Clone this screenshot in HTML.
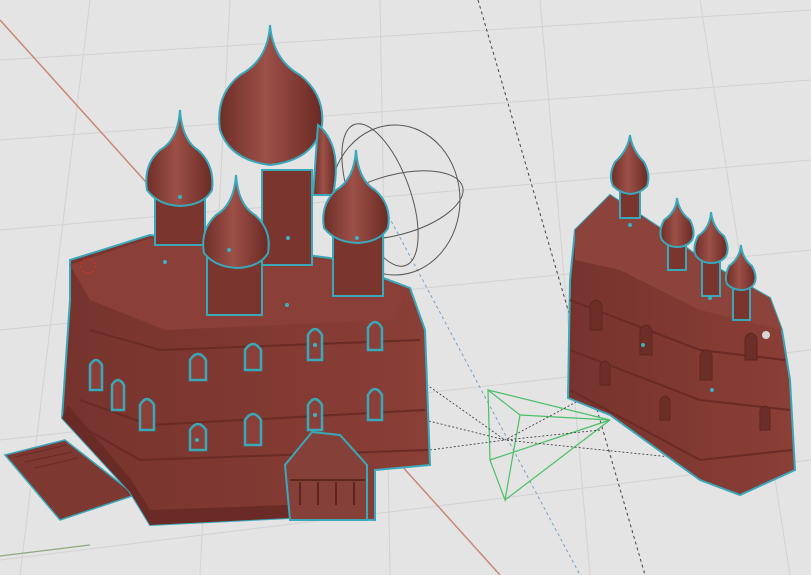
<!DOCTYPE html>
<html><head><meta charset="utf-8"><style>
html,body{margin:0;padding:0;width:811px;height:575px;overflow:hidden;background:#e4e4e4}
</style></head><body>
<svg width="811" height="575" viewBox="0 0 811 575" xmlns="http://www.w3.org/2000/svg">
<defs>
<linearGradient id="dome" x1="0" y1="0" x2="1" y2="0">
<stop offset="0" stop-color="#6e2e28"/><stop offset="0.45" stop-color="#9c5048"/><stop offset="1" stop-color="#6a2a24"/></linearGradient>
<linearGradient id="wall" x1="0" y1="0" x2="1" y2="0">
<stop offset="0" stop-color="#76332d"/><stop offset="1" stop-color="#8a3f37"/></linearGradient>
</defs>
<rect width="811" height="575" fill="#e4e4e4"/>
<g stroke="#d2d2d2" stroke-width="1">
<line x1="0" y1="60" x2="811" y2="10"/><line x1="0" y1="140" x2="811" y2="80"/><line x1="0" y1="230" x2="811" y2="160"/>
<line x1="0" y1="330" x2="811" y2="250"/><line x1="0" y1="440" x2="811" y2="350"/><line x1="0" y1="560" x2="811" y2="460"/>
<line x1="90" y1="0" x2="20" y2="575"/><line x1="230" y1="0" x2="200" y2="575"/><line x1="380" y1="0" x2="390" y2="575"/>
<line x1="540" y1="0" x2="590" y2="575"/><line x1="700" y1="0" x2="790" y2="575"/>
</g>
<line x1="0" y1="20" x2="500" y2="575" stroke="#c88878" stroke-width="1.5"/>
<line x1="0" y1="556" x2="90" y2="545" stroke="#8fa880" stroke-width="1.2"/>
<line x1="478" y1="0" x2="645" y2="575" stroke="#444" stroke-width="1" stroke-dasharray="3,3"/>
<line x1="380" y1="200" x2="580" y2="575" stroke="#7aa0c0" stroke-width="1" stroke-dasharray="3,3"/>
<g fill="none" stroke="#555" stroke-width="1">
<ellipse cx="395" cy="200" rx="65" ry="75"/><ellipse cx="395" cy="205" rx="70" ry="30" transform="rotate(-15 395 205)"/>
<ellipse cx="380" cy="195" rx="30" ry="75" transform="rotate(-20 380 195)"/></g>
<g fill="none" stroke="#4cbf6a" stroke-width="1.2">
<polygon points="488,390 520,415 505,500 490,460"/><line x1="488" y1="390" x2="610" y2="420"/><line x1="520" y1="415" x2="610" y2="420"/>
<line x1="505" y1="500" x2="610" y2="420"/><line x1="490" y1="460" x2="610" y2="420"/></g>
<g stroke="#333" stroke-width="0.8" stroke-dasharray="2,2">
<line x1="420" y1="380" x2="505" y2="440"/><line x1="425" y1="420" x2="505" y2="440"/><line x1="430" y1="450" x2="505" y2="440"/>
<line x1="580" y1="400" x2="505" y2="440"/><line x1="600" y1="430" x2="505" y2="440"/><line x1="700" y1="460" x2="505" y2="440"/>
</g>
<!-- left building -->
<polygon points="5,455 65,440 135,495 60,520" fill="#7c3831" stroke="#3aa8b8" stroke-width="1.5"/>
<g stroke="#6a2a25" stroke-width="1"><line x1="15" y1="457" x2="67" y2="445"/><line x1="25" y1="462" x2="72" y2="452"/><line x1="35" y1="468" x2="78" y2="458"/></g>
<polygon points="70,260 150,235 330,258 410,288 425,330 430,465 375,470 375,520 290,518 150,525 130,492 62,418 70,300" fill="url(#wall)" stroke="#3aa8b8" stroke-width="2"/>
<polygon points="70,265 150,238 330,260 405,290 395,320 165,330 90,300" fill="#8a3f38"/>
<polygon points="62,418 130,492 150,525 290,518 290,505 150,510 130,478 68,405" fill="#6a2a25"/>
<g stroke="#6a2a25" stroke-width="2" fill="none">
<path d="M90 330 L160 350 L420 340"/><path d="M80 400 L150 425 L425 410"/><path d="M70 420 L140 460 L428 450"/>
</g>
<g fill="#8a4038" stroke="#3aa8b8" stroke-width="2.5">
<path d="M190 450 v-20 q8 -12 16 0 v20z"/><path d="M245 445 v-25 q8 -12 16 0 v25z"/><path d="M308 430 v-25 q7 -12 14 0 v25z"/>
<path d="M368 420 v-25 q7 -12 14 0 v25z"/><path d="M190 380 v-20 q8 -12 16 0 v20z"/><path d="M308 360 v-25 q7 -12 14 0 v25z"/>
<path d="M368 350 v-22 q7 -12 14 0 v22z"/><path d="M245 370 v-20 q8 -12 16 0 v20z"/><path d="M140 430 v-25 q7 -12 14 0 v25z"/>
<path d="M90 390 v-25 q6 -10 12 0 v25z"/><path d="M112 410 v-25 q6 -10 12 0 v25z"/>
</g>
<g stroke="#3aa8b8" stroke-width="2">
<rect x="262" y="170" width="50" height="95" fill="#7a352f"/>
<path d="M270 25 Q268 60 240 75 Q215 95 220 130 Q230 160 270 165 Q315 160 322 125 Q325 95 300 75 Q273 60 270 25Z" fill="url(#dome)"/>
<path d="M318 125 q25 20 15 70 l-20 0z" fill="url(#dome)"/>
<rect x="155" y="195" width="50" height="50" fill="#7a352f"/>
<path d="M180 110 Q178 140 160 150 Q143 165 147 190 Q158 205 180 206 Q204 205 212 190 Q215 165 198 150 Q182 140 180 110Z" fill="url(#dome)"/>
<rect x="333" y="232" width="50" height="64" fill="#7a352f"/>
<path d="M356 150 Q354 180 336 190 Q320 205 324 228 Q335 242 357 243 Q380 242 388 228 Q392 205 375 190 Q358 180 356 150Z" fill="url(#dome)"/>
<rect x="207" y="250" width="55" height="65" fill="#7a352f"/>
<path d="M236 175 Q234 205 216 215 Q200 230 204 253 Q215 267 237 268 Q260 267 268 253 Q272 230 255 215 Q238 205 236 175Z" fill="url(#dome)"/>
<polygon points="285,465 312,432 340,435 367,465 367,520 290,520" fill="#86403a"/>
</g>
<g stroke="#5e2520" stroke-width="2"><line x1="290" y1="480" x2="365" y2="480"/><line x1="300" y1="482" x2="300" y2="505"/><line x1="318" y1="482" x2="318" y2="505"/><line x1="336" y1="482" x2="336" y2="505"/><line x1="354" y1="482" x2="354" y2="505"/></g>
<!-- right building -->
<polygon points="570,280 575,230 610,195 660,228 700,258 770,298 782,330 790,380 795,470 740,495 700,480 610,415 568,398" fill="url(#wall)" stroke="#3aa8b8" stroke-width="2"/>
<polygon points="575,230 610,195 660,228 700,258 770,298 782,330 700,310 620,270 575,260" fill="#8c433b"/>
<g stroke="#6a2a25" stroke-width="2" fill="none">
<path d="M570 300 L700 350 L785 360"/><path d="M570 350 L700 400 L790 410"/><path d="M570 390 L700 460 L792 450"/>
</g>
<g fill="#6e2e28" stroke="#5e2520">
<path d="M590 330 v-25 q6 -10 12 0 v25z"/><path d="M640 355 v-25 q6 -10 12 0 v25z"/><path d="M700 380 v-25 q6 -10 12 0 v25z"/><path d="M745 360 v-22 q6 -10 12 0 v22z"/>
<path d="M600 385 v-20 q5 -8 10 0 v20z"/><path d="M660 420 v-20 q5 -8 10 0 v20z"/><path d="M760 430 v-20 q5 -8 10 0 v20z"/>
</g>
<g stroke="#3aa8b8" stroke-width="2">
<rect x="620" y="188" width="20" height="30" fill="#7a352f"/>
<path d="M630 135 Q628 150 615 162 Q608 175 613 186 Q620 193 630 194 Q641 193 647 186 Q651 175 644 162 Q632 150 630 135Z" fill="url(#dome)"/>
<rect x="668" y="240" width="18" height="30" fill="#7a352f"/>
<path d="M677 198 Q676 212 664 220 Q658 232 662 240 Q668 247 677 247 Q687 247 692 240 Q696 232 690 220 Q679 212 677 198Z" fill="url(#dome)"/>
<rect x="702" y="256" width="18" height="40" fill="#7a352f"/>
<path d="M711 212 Q710 228 698 236 Q692 248 696 256 Q702 263 711 263 Q721 263 726 256 Q730 248 724 236 Q713 228 711 212Z" fill="url(#dome)"/>
<rect x="733" y="285" width="17" height="35" fill="#7a352f"/>
<path d="M741 245 Q740 258 729 266 Q724 277 727 284 Q733 290 741 290 Q750 290 754 284 Q758 277 752 266 Q742 258 741 245Z" fill="url(#dome)"/>
</g>
<g fill="#3fb0c0">
<circle cx="180" cy="197" r="2"/><circle cx="229" cy="250" r="2"/><circle cx="288" cy="238" r="2"/><circle cx="357" cy="238" r="2"/><circle cx="165" cy="262" r="2"/><circle cx="287" cy="305" r="2"/><circle cx="315" cy="345" r="2"/><circle cx="315" cy="415" r="2"/><circle cx="197" cy="440" r="2"/><circle cx="630" cy="225" r="2"/><circle cx="710" cy="298" r="2"/><circle cx="712" cy="390" r="2"/><circle cx="643" cy="345" r="2"/>
</g>
<circle cx="766" cy="335" r="4" fill="#d7d7d7"/>
<circle cx="88" cy="266" r="7" fill="none" stroke="#c33" stroke-width="1.5" stroke-dasharray="2,2"/>
</svg>
</body></html>
